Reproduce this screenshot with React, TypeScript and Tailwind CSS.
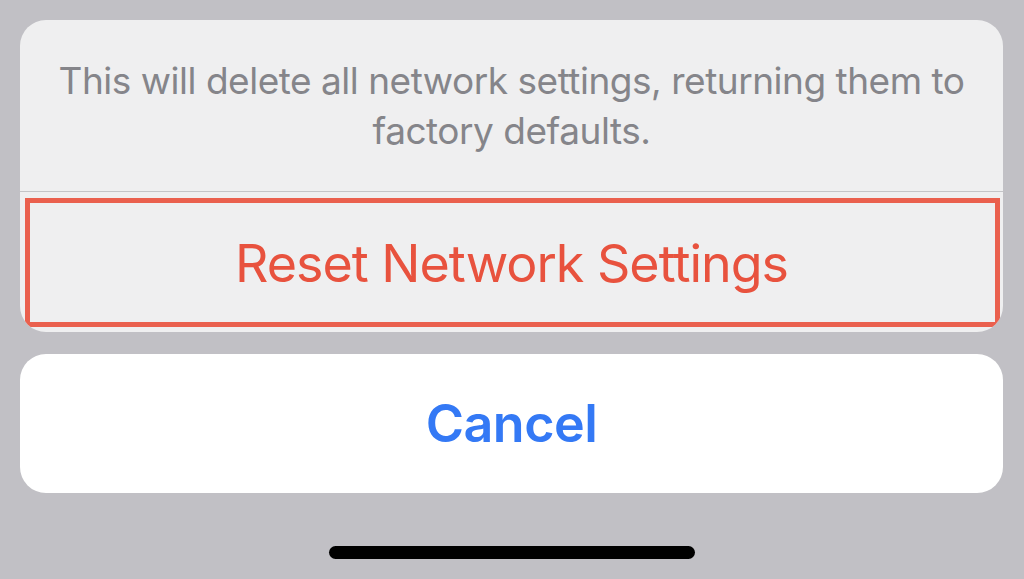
export default function App() {
  return (
    <div
      className="h-[579px] w-[1024px] overflow-hidden bg-[#c1c0c5] px-[20px] pt-[20px]"
      style={{ fontFamily: "Inter, 'Noto Sans', sans-serif" }}
    >
      <div className="w-[983px]">
        {/* action sheet group */}
        <div className="overflow-hidden rounded-[26px] bg-[#efeff0]">
          <div className="flex h-[171px] flex-col items-center justify-center text-center text-[37px] leading-[50px] tracking-[-0.48px] text-[#85858a]">
            <p>This will delete all network settings, returning them to</p>
            <p>factory defaults.</p>
          </div>
          <div className="h-px bg-[#c4c4c7]" />
          <div className="relative flex h-[140px] items-center justify-center pt-[3px]">
            <span className="text-[52px] tracking-[-1px] text-[#e8523e]">Reset Network Settings</span>
            {/* annotation box */}
            <div className="pointer-events-none absolute bottom-[5px] left-[5px] right-[3px] top-[6px] border-[5px] border-[#ea604e]" />
          </div>
        </div>

        {/* cancel */}
        <div className="mt-[22px] flex h-[139px] items-center justify-center rounded-[26px] bg-white">
          <span className="text-[52px] font-semibold tracking-[-0.5px] text-[#3479f5]">Cancel</span>
        </div>

        {/* home indicator */}
        <div className="mt-[53px] flex justify-center">
          <div className="h-[13px] w-[366px] rounded-full bg-black" />
        </div>
      </div>
    </div>
  );
}
